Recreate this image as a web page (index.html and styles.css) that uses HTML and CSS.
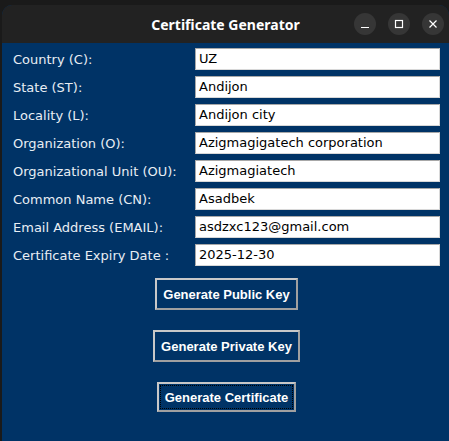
FILE: index.html
```html
<!DOCTYPE html>
<html>
<head>
<meta charset="utf-8">
<link rel="stylesheet" href="styles.css">
</head>
<body>
<div class="window">
  <div class="titlebar">
    <span class="title">Certificate Generator</span>
    <div class="controls">
      <span class="ctl"><svg width="10" height="10" viewBox="0 0 10 10"><path d="M1 8.5H9" stroke="#fff" stroke-width="1.2"/></svg></span>
      <span class="ctl"><svg width="10" height="10" viewBox="0 0 10 10"><rect x="1.5" y="1.5" width="7" height="7" fill="none" stroke="#fff" stroke-width="1.2"/></svg></span>
      <span class="ctl"><svg width="10" height="10" viewBox="0 0 10 10"><path d="M1.5 1.5L8.5 8.5M8.5 1.5L1.5 8.5" stroke="#fff" stroke-width="1.2"/></svg></span>
    </div>
  </div>
  <div class="content">
    <div class="form">
      <span class="label">Country (C):</span><div class="entry">UZ</div>
      <span class="label">State (ST):</span><div class="entry">Andijon</div>
      <span class="label">Locality (L):</span><div class="entry">Andijon city</div>
      <span class="label">Organization (O):</span><div class="entry">Azigmagigatech corporation</div>
      <span class="label">Organizational Unit (OU):</span><div class="entry">Azigmagiatech</div>
      <span class="label">Common Name (CN):</span><div class="entry">Asadbek</div>
      <span class="label">Email Address (EMAIL):</span><div class="entry">asdzxc123@gmail.com</div>
      <span class="label">Certificate Expiry Date :</span><div class="entry">2025-12-30</div>
    </div>
    <div class="buttons">
      <button class="btn b1">Generate Public Key</button>
      <button class="btn b2">Generate Private Key</button>
      <button class="btn b3"><span class="focus">Generate Certificate</span></button>
    </div>
  </div>
</div>
</body>
</html>
```
FILE: styles.css
```css
html, body {
  margin: 0;
  padding: 0;
  background: #1a1a1a;
  width: 449px;
  height: 441px;
  overflow: hidden;
}
.window {
  margin: 5px 0 0 2px;
  height: 436px;
  display: flex;
  flex-direction: column;
  border-radius: 10px 10px 0 0;
  overflow: hidden;
  background: #003366;
}
.titlebar {
  height: 38px;
  flex: none;
  background: #222222;
  position: relative;
  display: flex;
  align-items: center;
  justify-content: center;
}
.title {
  font-family: "Noto Sans", "DejaVu Sans", sans-serif;
  font-weight: bold;
  font-size: 14px;
  color: #ffffff;
}
.controls {
  position: absolute;
  right: 5px;
  top: 8px;
  display: flex;
  gap: 12px;
}
.ctl {
  width: 22px;
  height: 22px;
  border-radius: 50%;
  background: #363636;
  display: flex;
  align-items: center;
  justify-content: center;
}
.content {
  flex: 1;
  padding: 5px 9px 0 11px;
}
.form {
  display: grid;
  grid-template-columns: 182px 1fr;
  row-gap: 6px;
}
.label {
  font-family: "DejaVu Sans", sans-serif;
  font-size: 13px;
  color: #e8eef4;
  display: flex;
  align-items: center;
  height: 22px;
}
.entry {
  box-sizing: border-box;
  height: 22px;
  background: #ffffff;
  border: 1px solid #a8a8a8;
  border-right-color: #d8d8d8;
  border-bottom-color: #d8d8d8;
  font-family: "DejaVu Sans", sans-serif;
  font-size: 13px;
  color: #000;
  padding: 0 3px;
  line-height: 20px;
}
.buttons {
  display: flex;
  flex-direction: column;
  align-items: center;
  margin-top: 12px;
  gap: 20px;
}
.btn {
  font-family: "Liberation Sans", Arial, sans-serif;
  font-weight: bold;
  font-size: 13px;
  color: #ffffff;
  background: #003366;
  border: 2px solid #c8c8c8;
  border-right-color: #a0a0a0;
  border-bottom-color: #a0a0a0;
  padding: 0 6px;
  height: 32px;
  margin: 0;
}
.b3 {
  height: 30px;
  padding: 1px;
}
.focus {
  display: flex;
  align-items: center;
  height: 100%;
  box-sizing: border-box;
  padding: 0 4px;
  border: 1px dotted #000;
}
```
